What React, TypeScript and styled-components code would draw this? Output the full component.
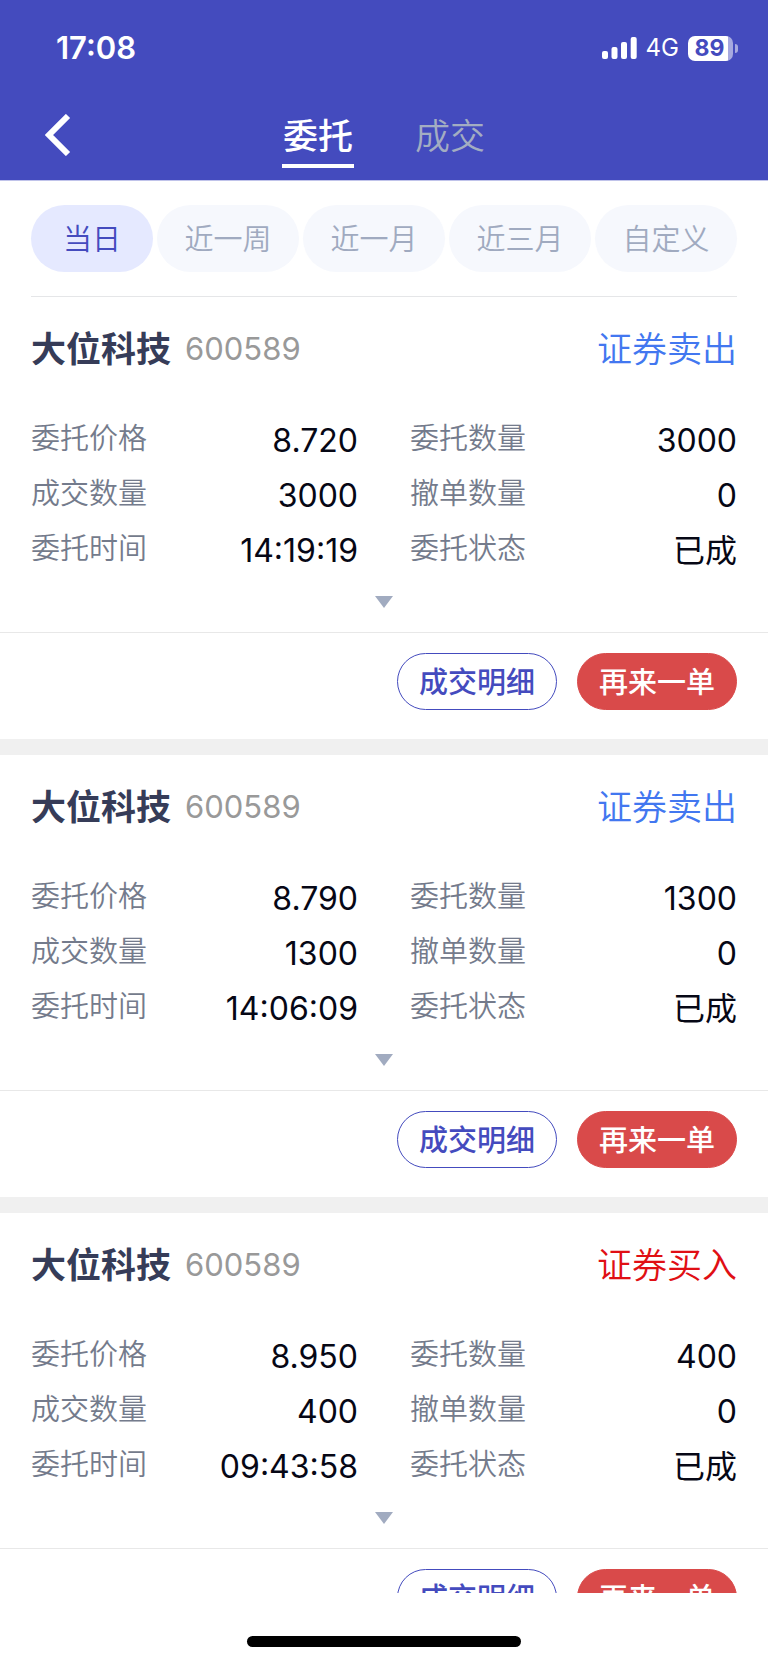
import React, { useState } from "react";
import styled, { createGlobalStyle } from "styled-components";

const GlobalStyle = createGlobalStyle`
  *, *::before, *::after { box-sizing: border-box; }
  body {
    margin: 0;
    background: #fff;
    font-family: Inter, "Noto Sans CJK SC", sans-serif;
  }
  button { font-family: inherit; cursor: pointer; }
  h2, dl, dt, dd { margin: 0; }
`;

const Screen = styled.div`
  display: flex;
  flex-direction: column;
  height: 100vh;
  line-height: 40px;
`;

const Header = styled.header`
  flex: none;
  color: #fff;
  background: #444bbe;
  border-bottom: 1px solid #c0c3ea;
`;

const StatusBar = styled.div`
  display: flex;
  align-items: center;
  justify-content: space-between;
  height: 96px;
  padding: 0 30px 0 56px;
`;

const Clock = styled.time`
  font-size: 31px;
  font-weight: 600;
`;

const StatusIcons = styled.div`
  display: flex;
  align-items: center;
  gap: 9px;
`;

const Network = styled.span`
  font-size: 24px;
`;

const Battery = styled.div`
  display: flex;
  align-items: center;
  gap: 2px;
`;

const BatteryBody = styled.span`
  width: 45px;
  height: 25px;
  padding-right: 2px;
  border-radius: 7px;
  background: linear-gradient(to right, #fff 89%, #a6a9e0 89%);
  color: #444bbe;
  font-size: 23px;
  font-weight: 700;
  line-height: 25px;
  text-align: center;
`;

const BatteryCap = styled.span`
  width: 3px;
  height: 9px;
  border-radius: 0 3px 3px 0;
  background: #a6a9e0;
`;

const NavBar = styled.div`
  display: grid;
  grid-template-columns: 1fr auto 1fr;
  height: 84px;
  padding: 0 31px;
`;

const BackButton = styled.button`
  justify-self: start;
  display: flex;
  align-items: center;
  height: 78px;
  padding: 0 14px;
  border: 0;
  background: none;
  color: #fff;
`;

const Tabs = styled.nav`
  display: flex;
  align-items: flex-start;
  gap: 60px;
`;

const Tab = styled.button<{ $active: boolean }>`
  width: 72px;
  height: 72px;
  padding: 14px 0 2px;
  border: 0;
  border-bottom: 4px solid ${(p) => (p.$active ? "#fff" : "transparent")};
  background: none;
  color: ${(p) => (p.$active ? "#fff" : "#a3adc2")};
  font-size: 35px;
  font-weight: ${(p) => (p.$active ? 500 : 350)};
  line-height: 52px;
  white-space: nowrap;
`;

const Filters = styled.div`
  flex: none;
  display: flex;
  gap: 4px;
  margin: 0 31px;
  padding: 24px 0;
  border-bottom: 1px solid #e5e6e8;
`;

const Chip = styled.button<{ $active: boolean }>`
  flex: ${(p) => (p.$active ? "122 1 0" : "142 1 0")};
  height: 67px;
  padding: 2px 0 0;
  border: 0;
  border-radius: 34px;
  background: ${(p) => (p.$active ? "#e5e9ff" : "#f6f8fd")};
  color: ${(p) => (p.$active ? "#444bbe" : "#a0aac0")};
  font-size: 29px;
  font-weight: 350;
  line-height: 40px;
  white-space: nowrap;
`;

const OrderList = styled.main`
  flex: 1;
  min-height: 0;
  overflow-y: auto;
  scrollbar-width: none;
`;

const Card = styled.article`
  border-bottom: 16px solid #f0f0f0;
`;

const CardHeader = styled.div`
  display: flex;
  align-items: center;
  height: 104px;
  padding: 0 31px;
`;

const StockName = styled.h2`
  color: #363c58;
  font-size: 35px;
  font-weight: 700;
`;

const StockCode = styled.span`
  flex: 1;
  margin-left: 14px;
  color: #999;
  font-size: 31px;
  font-weight: 400;
`;

const Side = styled.span<{ $buy: boolean }>`
  color: ${(p) => (p.$buy ? "#e00f14" : "#4277f0")};
  font-size: 35px;
  font-weight: 350;
`;

const Fields = styled.dl`
  display: grid;
  grid-template-columns: 1fr 1fr;
  column-gap: 52px;
  padding: 10px 31px 0;
`;

const Field = styled.div`
  display: flex;
  align-items: center;
  justify-content: space-between;
  height: 55px;
`;

const Label = styled.dt`
  color: #747b8c;
  font-size: 29px;
  font-weight: 350;
`;

const Value = styled.dd`
  padding-top: 4px;
  color: #060715;
  font-size: 32px;
`;

const ExpandButton = styled.button`
  display: flex;
  justify-content: center;
  width: 100%;
  height: 56px;
  padding: 20px 0 0;
  border: 0;
  background: none;
`;

const Actions = styled.div`
  display: flex;
  justify-content: flex-end;
  gap: 20px;
  padding: 20px 31px 29px;
  border-top: 1px solid #e8e8e8;
`;

const Action = styled.button<{ $filled?: boolean }>`
  width: 160px;
  height: 57px;
  padding: 2px 0 0;
  border: 1px solid ${(p) => (p.$filled ? "#d94a4a" : "#444bbe")};
  border-radius: 29px;
  background: ${(p) => (p.$filled ? "#d94a4a" : "#fff")};
  color: ${(p) => (p.$filled ? "#fff" : "#444bbe")};
  font-size: 29px;
  font-weight: 500;
  line-height: 40px;
  white-space: nowrap;
`;

const HomeArea = styled.footer`
  flex: none;
  display: flex;
  justify-content: center;
  align-items: flex-start;
  height: 70px;
  padding-top: 43px;
`;

const HomeIndicator = styled.div`
  width: 274px;
  height: 11px;
  border-radius: 6px;
  background: #000;
`;

interface Order {
  name: string;
  code: string;
  side: string;
  buy: boolean;
  fields: [string, string][];
}

const makeOrder = (
  side: string,
  price: string,
  quantity: string,
  time: string
): Order => ({
  name: "大位科技",
  code: "600589",
  side,
  buy: side === "证券买入",
  fields: [
    ["委托价格", price],
    ["委托数量", quantity],
    ["成交数量", quantity],
    ["撤单数量", "0"],
    ["委托时间", time],
    ["委托状态", "已成"],
  ],
});

const orders: Order[] = [
  makeOrder("证券卖出", "8.720", "3000", "14:19:19"),
  makeOrder("证券卖出", "8.790", "1300", "14:06:09"),
  makeOrder("证券买入", "8.950", "400", "09:43:58"),
];

const ranges = ["当日", "近一周", "近一月", "近三月", "自定义"];

function SignalIcon() {
  return (
    <svg width="35" height="22" viewBox="0 0 35 22" fill="#fff" aria-hidden="true">
      <rect x="0" y="14" width="6" height="8" rx="2" />
      <rect x="9.5" y="10" width="6" height="12" rx="2" />
      <rect x="19" y="5" width="6" height="17" rx="2" />
      <rect x="28.7" y="0" width="6" height="22" rx="2" />
    </svg>
  );
}

function OrderCard({ order }: { order: Order }) {
  return (
    <Card>
      <CardHeader>
        <StockName>{order.name}</StockName>
        <StockCode>{order.code}</StockCode>
        <Side $buy={order.buy}>{order.side}</Side>
      </CardHeader>
      <Fields>
        {order.fields.map(([label, value]) => (
          <Field key={label}>
            <Label>{label}</Label>
            <Value>{value}</Value>
          </Field>
        ))}
      </Fields>
      <ExpandButton type="button" aria-label="展开">
        <svg width="18" height="12" viewBox="0 0 18 12" aria-hidden="true">
          <path d="M0 0h18L9 12z" fill="#a1abc0" />
        </svg>
      </ExpandButton>
      <Actions>
        <Action type="button">成交明细</Action>
        <Action type="button" $filled>
          再来一单
        </Action>
      </Actions>
    </Card>
  );
}

export default function App() {
  const [tab, setTab] = useState("委托");
  const [range, setRange] = useState("当日");

  return (
    <Screen>
      <GlobalStyle />
      <Header>
        <StatusBar>
          <Clock>17:08</Clock>
          <StatusIcons>
            <SignalIcon />
            <Network>4G</Network>
            <Battery>
              <BatteryBody>89</BatteryBody>
              <BatteryCap />
            </Battery>
          </StatusIcons>
        </StatusBar>
        <NavBar>
          <BackButton type="button" aria-label="返回">
            <svg width="26" height="42" viewBox="0 0 26 42" fill="none" aria-hidden="true">
              <path d="M23 2L4 21l19 19" stroke="currentColor" strokeWidth="6" />
            </svg>
          </BackButton>
          <Tabs>
            {["委托", "成交"].map((name) => (
              <Tab key={name} type="button" $active={name === tab} onClick={() => setTab(name)}>
                {name}
              </Tab>
            ))}
          </Tabs>
        </NavBar>
      </Header>
      <Filters>
        {ranges.map((name) => (
          <Chip key={name} type="button" $active={name === range} onClick={() => setRange(name)}>
            {name}
          </Chip>
        ))}
      </Filters>
      <OrderList>
        {orders.map((order, i) => (
          <OrderCard key={i} order={order} />
        ))}
      </OrderList>
      <HomeArea>
        <HomeIndicator />
      </HomeArea>
    </Screen>
  );
}
